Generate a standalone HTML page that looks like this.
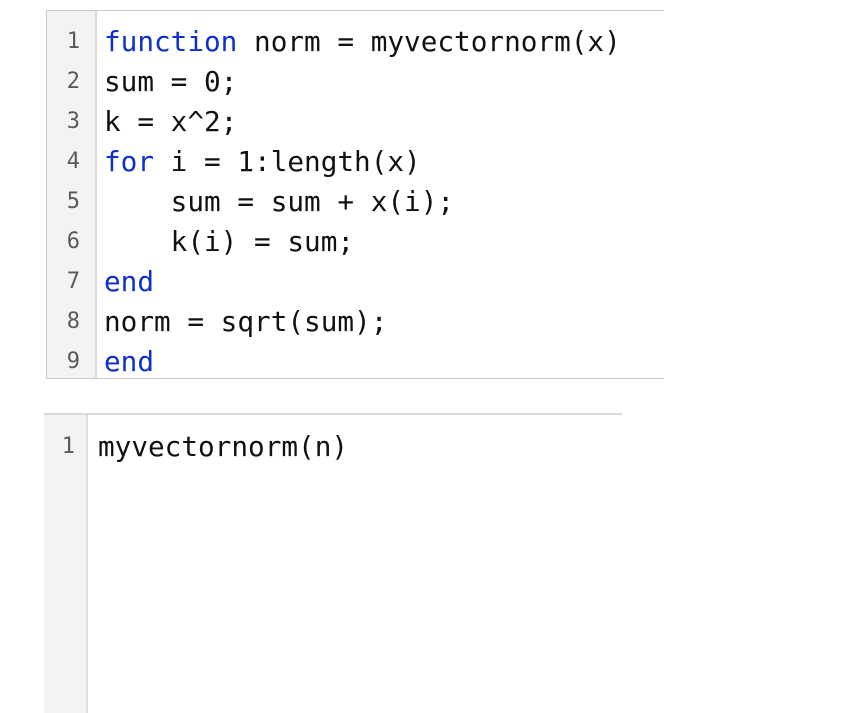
<!DOCTYPE html>
<html><head><style>
body{margin:0;background:#fff;width:857px;height:711px;overflow:hidden;position:relative;font-family:"DejaVu Sans Mono","Liberation Mono",monospace;}
.box1{position:absolute;left:46px;top:10px;width:617px;height:367px;border:1px solid #c8c8c8;border-right:none;}
.g1{position:absolute;left:0;top:0;width:48px;height:100%;background:#f3f3f3;border-right:2px solid #dcdcdc;}
.ln{position:absolute;right:14px;font-size:22px;color:#5a5a5a;line-height:40px;text-align:right;}
.code{position:absolute;font-size:27.7px;line-height:40px;color:#111;white-space:pre;}
.k{color:#0e2fd0;}
.box2{position:absolute;left:44px;top:413px;width:578px;height:298px;border-top:2px solid #d8d8d8;}
.g2{position:absolute;left:0;top:0;width:42px;height:100%;background:#f3f3f3;border-right:2px solid #dcdcdc;}
</style></head><body>
<div class="box1"><div class="g1"></div>
<div class="ln" style="right:auto;left:0;width:33px;top:11px">1<br>2<br>3<br>4<br>5<br>6<br>7<br>8<br>9</div>
<div class="code" style="left:57px;top:11px"><span class="k">function</span> norm = myvectornorm(x)
sum = 0;
k = x^2;
<span class="k">for</span> i = 1:length(x)
    sum = sum + x(i);
    k(i) = sum;
<span class="k">end</span>
norm = sqrt(sum);
<span class="k">end</span></div>
</div>
<div class="box2"><div class="g2"></div>
<div class="ln" style="right:auto;left:0;width:31px;top:12px">1</div>
<div class="code" style="left:54px;top:12px">myvectornorm(n)</div>
</div>
</body></html>
